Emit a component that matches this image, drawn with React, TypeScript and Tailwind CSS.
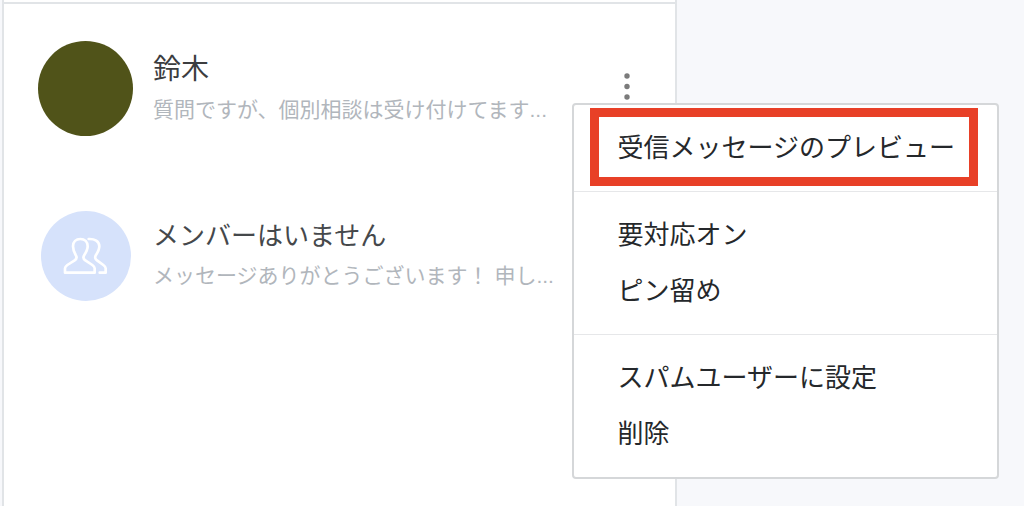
import React from 'react';

interface Chat {
  id: number;
  name: string;
  message: string;
  menuOpen?: boolean;
}

const chats: Chat[] = [
  { id: 1, name: '鈴木', message: '質問ですが、個別相談は受け付けてます...', menuOpen: true },
  { id: 2, name: 'メンバーはいません', message: 'メッセージありがとうございます！ 申し...' },
];

const menuGroups = [
  ['受信メッセージのプレビュー'],
  ['要対応オン', 'ピン留め'],
  ['スパムユーザーに設定', '削除'],
];

const MembersIcon: React.FC = () => (
  <svg
    viewBox="10 17 135 114"
    className="w-[45px] h-[38px]"
    fill="none"
    stroke="#ffffff"
    strokeWidth="8"
    strokeLinecap="round"
    strokeLinejoin="round"
    aria-hidden="true"
  >
    <path d="M16 124H105V111C105 107 102 104 98 101L77 87C71 83 70 77 74 71C80 62 84 54 84 45C84 32 75 23 62 23C49 23 40 32 40 45C40 54 43 62 48 71C52 77 51 83 45 87L23 101C19 104 16 107 16 111Z" />
    <path d="M87 23C105 22 119 30 119 45C119 54 115 62 109 71C105 77 106 83 112 87L131 101C135 104 138 107 138 111V124H120" />
  </svg>
);

const ContextMenu: React.FC = () => (
  <div
    role="menu"
    className="absolute top-full -left-[39px] z-10 -mt-px w-[427px] rounded border-2 border-[#d5d7d9] bg-white divide-y divide-[#e6e7e9]"
  >
    {menuGroups.map((group, index) => (
      <div key={group[0]} className="relative py-[15px]">
        {group.map((label) => (
          <button
            key={label}
            type="button"
            role="menuitem"
            className="block h-14 w-full pl-11 text-left text-[26px] leading-14 whitespace-nowrap text-[#25282b]"
          >
            {label}
          </button>
        ))}
        {index === 0 && (
          <div className="pointer-events-none absolute top-[3px] right-[19px] bottom-[5px] left-4 border-9 border-[#e84027]" />
        )}
      </div>
    ))}
  </div>
);

const ChatRow: React.FC<{ chat: Chat }> = ({ chat }) => (
  <li className="flex h-[168px] items-center gap-5 pl-[34px] pr-8">
    <div className="flex w-[95px] shrink-0 justify-center">
      {chat.menuOpen ? (
        <div className="size-[95px] rounded-full bg-[#505319]" />
      ) : (
        <div className="flex size-[90px] items-center justify-center rounded-full bg-[#d6e2fb]">
          <MembersIcon />
        </div>
      )}
    </div>
    <div className={`min-w-0 flex-1 overflow-hidden whitespace-nowrap ${chat.menuOpen ? 'pt-1' : ''}`}>
      <p className={`leading-10 ${chat.menuOpen ? 'text-[28px] text-[#3c3d3f]' : 'text-[26px] text-[#45484b]'}`}>
        {chat.name}
      </p>
      <p className="text-[21px] leading-10 text-[#b1b6bc]">{chat.message}</p>
    </div>
    {chat.menuOpen && (
      <div className="relative">
        <button type="button" aria-label="メニュー" className="flex size-8 items-center justify-center">
          <svg viewBox="0 0 32 32" className="size-8" fill="#7b7b7b" aria-hidden="true">
            <circle cx="16" cy="4" r="2.700" />
            <circle cx="16" cy="14.500" r="2.700" />
            <circle cx="16" cy="25" r="2.700" />
          </svg>
        </button>
        <ContextMenu />
      </div>
    )}
  </li>
);

const App: React.FC = () => {
  return (
    <div className="flex min-h-screen bg-[#f7f8fb] pl-0.5 font-['Liberation_Sans','Noto_Sans_CJK_JP',sans-serif]">
      <main className="w-[66%] border-x-2 border-[#e1e4e7] bg-white">
        <div className="h-1 border-b-2 border-[#e1e4e7]" />
        <ul>
          {chats.map((chat) => (
            <ChatRow key={chat.id} chat={chat} />
          ))}
        </ul>
      </main>
    </div>
  );
};

export default App;
